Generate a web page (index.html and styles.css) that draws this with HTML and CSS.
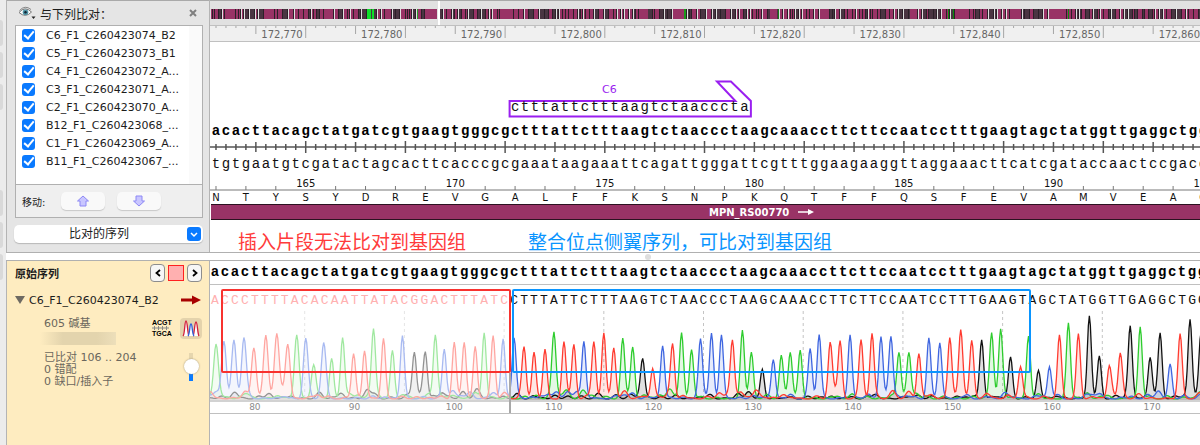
FILE: index.html
```
<!DOCTYPE html>
<html lang="zh-CN">
  <head>
    <meta charset="utf-8">
    <title>C6_F1_C260423074_B2</title>
    <link rel="stylesheet" href="styles.css">
  </head>

  <body>
    <div class="app">
      <div class="edge">
        <i></i><i></i><i></i><i class="low"></i><i></i><i></i>
      </div>

      <div class="side">
        <div class="side-head">
          <svg class="eye" width="20" height="14" viewBox="0 0 20 14">
            <path d="M1 6.500Q7-.5 13.500 6Q7.500 12.500 1 6.500Z" fill="#fff" stroke="#777" stroke-width="1"/>
            <path d="M1.500 4.500Q7-1.500 13 3.500" fill="none" stroke="#888"/>
            <circle cx="7.500" cy="6.200" r="2.800" fill="#4f93a4"/>
            <circle cx="7.500" cy="6.200" r="1.200" fill="#123"/>
            <path d="M13.500 10.500h4l-2 2.500z" fill="#222"/>
          </svg>
          <span>与下列比对：</span>
          <button class="close" aria-label="关闭">
            <svg width="8" height="8" viewBox="0 0 8 8"><path d="M1 1l6 6M7 1L1 7" stroke="#808080" stroke-width="2"/></svg>
          </button>
        </div>

        <div class="reads">
          <div class="list">
            <label><input type="checkbox" checked>C6_F1_C260423074_B2</label>
            <label><input type="checkbox" checked>C5_F1_C260423073_B1</label>
            <label><input type="checkbox" checked>C4_F1_C260423072_A...</label>
            <label><input type="checkbox" checked>C3_F1_C260423071_A...</label>
            <label><input type="checkbox" checked>C2_F1_C260423070_A...</label>
            <label><input type="checkbox" checked>B12_F1_C260423068_...</label>
            <label><input type="checkbox" checked>C1_F1_C260423069_A...</label>
            <label><input type="checkbox" checked>B11_F1_C260423067_...</label>
          </div>
          <div class="move">
            <span>移动:</span>
            <button aria-label="上移">
              <svg width="14" height="12" viewBox="0 0 14 12"><path d="M7 1l5.500 5H10v5H4V6H1.500z" fill="#c9c6ff" stroke="#8d88f5"/></svg>
            </button>
            <button aria-label="下移">
              <svg width="14" height="12" viewBox="0 0 14 12"><path d="M7 11l5.500-5H10V1H4v5H1.500z" fill="#c9c6ff" stroke="#8d88f5"/></svg>
            </button>
          </div>
        </div>

        <div class="picker">
          <select aria-label="显示">
            <option>比对的序列</option>
          </select>
          <svg width="14" height="14" viewBox="0 0 14 14"><rect width="14" height="14" rx="3" fill="#0a7aff"/><path d="M4 6l3 3 3-3" fill="none" stroke="#fff" stroke-width="1.500"/></svg>
        </div>
      </div>

      <div class="main">
        <div class="overview">
          <svg id="genome" viewBox="0 0 990 10" preserveAspectRatio="none"></svg>
          <b class="here"></b>
        </div>
        <div class="ruler"><div class="track" id="ruler"></div></div>
        <div class="feature">
          <span class="feature-name">C6</span>
          <div class="track" id="primer">
            <svg class="flag" viewBox="0 0 1000 39" preserveAspectRatio="none">
              <path d="M299.500 21H526L507.500 1.500H521.500L541.500 21V36.500H299.500Z" fill="none" stroke="#9a1ff0" stroke-width="2"/>
            </svg>
          </div>
        </div>
        <div class="track seq bold" id="top"></div>
        <div class="track" id="axis"></div>
        <div class="track seq" id="bottom"></div>
        <div class="track aanum" id="aanum"></div>
        <div class="track aa" id="aa"></div>
        <div class="gene">
          <span>MPN_RS00770</span>
          <svg width="16" height="8" viewBox="0 0 16 8"><path d="M0 4h12" stroke="#fff" stroke-width="1.500"/><path d="M10 1l6 3-6 3z" fill="#fff"/></svg>
        </div>
        <div class="notes">
          <span class="red">插入片段无法比对到基因组</span>
          <span class="blue">整合位点侧翼序列，可比对到基因组</span>
        </div>
      </div>

      <div class="split"><i></i></div>

      <div class="side original">
        <div class="orig-head">
          <b>原始序列</b>
          <button aria-label="上一个"><svg width="6" height="8" viewBox="0 0 6 8"><path d="M5 1L1.500 4L5 7" fill="none" stroke="#000" stroke-width="1.800"/></svg></button>
          <i></i>
          <button aria-label="下一个"><svg width="6" height="8" viewBox="0 0 6 8"><path d="M1 1l3.500 3L1 7" fill="none" stroke="#000" stroke-width="1.800"/></svg></button>
        </div>
        <div class="read-name">
          <svg width="10" height="8" viewBox="0 0 10 8"><path d="M0 0h10L5 8z" fill="#6e6a62"/></svg>
          <span>C6_F1_C260423074_B2</span>
          <svg class="arrow" width="20" height="10" viewBox="0 0 20 10"><path d="M0 3.500h11V.5L20 5l-9 4.500v-3H0z" fill="#a80000"/></svg>
        </div>
        <div class="info">
          <div class="facts">
            <p>605 碱基</p>
            <div class="hidden-name"></div>
            <p>已比对 106 .. 204</p>
            <p>0 错配</p>
            <p>0 缺口/插入子</p>
          </div>
          <div class="bases"><span>ACGT</span><svg width="17" height="4" viewBox="0 0 17 4"><path d="M0 2h17M2.500 0v4M6.500 0v4M10.500 0v4M14.500 0v4" stroke="#888" stroke-width="1"/></svg><span>TGCA</span></div>
          <div class="view">
            <button aria-label="峰图">
              <svg width="18" height="17" viewBox="0 0 18 17">
                <path d="M1 16C3 14 2.500 1 4 1S5.500 14 7 16M11 16C12.500 14 12.500 2 14 2S15.500 14 17 16" fill="#fff" stroke="#d3203c" stroke-width="1.300"/>
                <path d="M6 16C8 14 7.500 4 9 4S10 14 12 16" fill="#fff" stroke="#3060d8" stroke-width="1.300"/>
              </svg>
            </button>
            <input type="range" min="0" max="100" value="55" aria-label="峰高">
          </div>
        </div>
      </div>

      <div class="main">
        <div class="track seq bold ref" id="ref"></div>
        <div class="chroma">
          <div class="track seq read" id="read"></div>
          <div class="track" id="trace"></div>
          <div class="track readnum" id="readnum"></div>
          <div class="box box-red"></div>
          <div class="box box-blue"></div>
          <div class="cut"></div>
        </div>
      </div>
    </div>

    <script>
      const seq = 'acacttacagctatgatcgtgaagtgggcgctttattctttaagtctaaccctaagcaaaccttcttccaatcctttgaagtagctatggttgaggctgg';
      const read = 'ACCCTTTTACACAATTATACGGACTTTATC' + seq.slice(30).toUpperCase();
      const protein = 'NTYSYDREVGALFFKSNPKQTFFQSFEVAMVEAG';
      const pair = { a: 't', t: 'a', c: 'g', g: 'c' };

      // x and height of the main peak of every base of the read
      const peaks = [
        [6,50],[14,56],[24,58],[34,59],[44,51],[56,63],[67,61],[78,54],[87,64],[96,58],
        [104,34],[114,53],[122,39],[133,61],[144,43],[155,47],[164,68],[174,59],[183,48],[193,62],
        [205,43],[216,41],[226,61],[235,49],[245,55],[255,53],[266,52],[275,66],[284,59],[294,56],
        [305,60],[315,48],[325,45],[336,49],[345,62],[355,56],[365,52],[375,57],[385,55],[395,66],
        [405,50],[414,59],[424,50],[434,36],[444,30],[454,53],[464,53],[473,65],[483,48],[492,55],
        [503,64],[513,64],[524,57],[534,68],[543,43],[554,29],[565,39],[573,41],[582,46],[592,48],
        [602,48],[611,64],[622,52],[632,56],[642,64],[653,58],[664,64],[673,62],[683,57],[691,44],
        [701,42],[711,45],[721,60],[732,56],[742,60],[753,61],[764,52],[774,59],[784,66],[793,65],
        [803,39],[813,30],[821,62],[831,27],[842,32],[852,61],[861,74],[871,63],[882,82],[892,42],
        [902,27],[913,41],[923,68],[933,72],[943,41],[953,61],[963,34],[973,61],[983,79],[994,65]
      ];
      const inks = { G: '#111111', A: '#2ecc2e', C: '#3f66e0', T: '#ff3b30' };

      const byId = id => document.getElementById(id);
      let seed = 11;
      function rnd() {
        seed = (seed * 16807) % 2147483647;
        return seed / 2147483647;
      }

      function letters(id, text, step, first, cls) {
        let html = '';
        for (let i = 0; i < text.length; i++) {
          html += `<span class="${cls || ''}" style="grid-column:${first + i * step + 1}">${text[i]}</span>`;
        }
        byId(id).insertAdjacentHTML('beforeend', html);
      }

      function numbers(id, list) {
        byId(id).insertAdjacentHTML('beforeend', list.map(n =>
          `<span class="num" style="grid-column:${n[0]} / ${n[1]}">${n[2]}</span>`).join(''));
      }

      function draw(id, height, body) {
        byId(id).insertAdjacentHTML('afterbegin',
          `<svg viewBox="0 0 1000 ${height}" preserveAspectRatio="none" height="${height}">${body}</svg>`);
      }

      // ticks under every base: short, 5th and 10th
      function ticks(make) {
        let d = '';
        for (let i = 0; i < 100; i++) d += make(i * 10 + 5, (i + 1) % 10 == 0 ? 2 : (i + 1) % 5 == 0 ? 1 : 0, i);
        return d;
      }

      letters('top', seq, 1, 0);
      letters('bottom', [...seq].map(b => pair[b]).join(''), 1, 0);
      letters('ref', seq, 1, 0);
      letters('read', read.slice(0, 30), 1, 0, 'faded');
      letters('read', read.slice(30), 1, 30);
      letters('primer', seq.slice(30, 54), 1, 30);
      letters('aa', protein, 3, 0);

      draw('ruler', 15, `<path d="${ticks((x, k) => `M${x} 0v${[2, 8, 12][k]}`)}" stroke="#a6a6a6" stroke-width="1"/>`);
      draw('axis', 14, `<path d="M-2 7H1000${ticks((x, k) => `M${x} ${7 - [3, 5, 6][k]}v${[6, 10, 12][k]}`)}" stroke="#555" stroke-width="1.500"/>`);
      draw('aanum', 14, `<path d="M-2 13H1000${ticks((x, k, i) => i % 3 || i % 15 == 9 ? '' : `M${x} 9v4`)}" stroke="#777" stroke-width="1"/>`);

      const marks = [], aaMarks = [], readMarks = [];
      for (let i = 0; i < 10; i++) marks.push([i * 10 + 5, i * 10 + 11, (172770 + i * 10).toLocaleString('en-US')]);
      for (let i = 9, n = 165; i < 99; i += 15, n += 5) aaMarks.push([i, i + 3, n]);
      aaMarks.push([100, 101, 195]);
      for (let i = 4, n = 80; i < 100; i += 10, n += 10) readMarks.push([i - 1, i + 4, n]);
      numbers('ruler', marks);
      numbers('aanum', aaMarks);
      numbers('readnum', readMarks);

      // whole-genome strip
      const wide = [[17,8],[56,7],[114,8],[175,6],[219,8],[290,11],[430,8],[464,9],[560,7],[610,6],[700,7],[746,13],[800,9],[840,12]];
      let strip = '';
      for (let x = 1; x < 990;) {
        const w = 1 + Math.floor(rnd() * 4);
        strip += `<rect x="${x}" y="0" width="${w}" height="10" fill="${rnd() > .35 ? '#993366' : '#4a3542'}"/><rect x="${x + w}" y="0" width="1" height="10" fill="#2b2028"/>`;
        x += w + 1 + (rnd() > .6 ? 1 : 0);
      }
      wide.forEach(g => strip += `<rect x="${g[0]}" y="0" width="${g[1]}" height="10" fill="#993366"/>`);
      [[157,4,'#0ee02a'],[162,2,'#0ee02a'],[207,1,'#2a9a2a'],[474,2,'#1a9a1a'],[568,1,'#1a7a1a'],[738,1,'#0c8a0c'],[743,1,'#0c8a0c'],[858,1,'#0c8a0c']]
        .forEach(g => strip += `<rect x="${g[0]}" y="0" width="${g[1]}" height="10" fill="${g[2]}"/>`);
      byId('genome').innerHTML = strip;

      // four traces, summed from the main peaks and a low background
      const base = 89;
      let grid = '', fills = '', lines = '';
      for (let x = 95; x < 1000; x += 100) grid += `M${x} 0V${base}`;
      for (const b in inks) {
        const bumps = peaks.map((p, i) => [p[0], p[1], i < 12 ? 2.300 : 2]).filter((p, i) => read[i] == b);
        for (let x = 0; x < 1000; x += 6 + rnd() * 12) bumps.push([x, 1 + rnd() * rnd() * 10, 3]);
        let d = '';
        for (let x = 0; x <= 1000; x++) {
          let h = 0;
          bumps.forEach(p => {
            const t = (x - p[0]) / p[2];
            if (Math.abs(t) < 4) h += p[1] * Math.exp(-t * t / 2);
          });
          d += `${x ? 'L' : 'M'}${x} ${(base - 1 - h).toFixed(1)}`;
        }
        fills += `<path d="${d}V${base}H0Z" fill="${inks[b]}" fill-opacity=".13"/>`;
        lines += `<path d="${d}" fill="none" stroke="${inks[b]}" stroke-width="1.300"/>`;
      }
      draw('trace', 91, `<path d="${grid}" stroke="#c4c4c4" stroke-dasharray="3 3"/>${fills}${lines}
        <rect width="300" height="${base}" fill="#fff" fill-opacity=".55"/>
        <rect y="${base}" width="1000" height="2" fill="#d2d2d2"/>`);
    </script>
  </body>
</html>
```
FILE: styles.css
```
* {
  box-sizing: border-box;
}

body {
  margin: 0;
  background: #fff;
  color: #1c1c1c;
  font-family: "DejaVu Sans", "Noto Sans CJK SC", sans-serif;
  font-size: 11px;
}

button {
  display: flex;
  align-items: center;
  justify-content: center;
  padding: 0;
  border: 0;
  background: none;
}

p {
  margin: 0;
}

.app {
  display: grid;
  grid-template-columns: 6px 204px minmax(0, 1fr);
  grid-template-rows: auto auto 1fr;
  min-height: 100vh;
}

/* left window edge */
.edge {
  grid-row: 1 / 4;
  display: flex;
  flex-direction: column;
  gap: 6px;
  padding-top: 20px;
  background: #ececec;
}

.edge i {
  width: 3px;
  height: 26px;
  border-radius: 0 4px 4px 0;
  background: #d9d9d9;
}

.edge .low {
  margin-top: 74px;
}

.side {
  border-left: 1px solid #b4b4b4;
  border-right: 1px solid #b4b4b4;
  background: #e5e5e5;
}

.side-head {
  display: flex;
  align-items: center;
  height: 25px;
  padding: 0 12px 0 11px;
  border-top: 1px solid #a9a9a9;
  font-size: 12px;
}

.eye {
  margin-right: 2px;
}

.close {
  margin-left: auto;
}

.reads {
  margin: 0 6px 0 8px;
  border: 1px solid #b0b0b0;
  background: #fff;
}

.list {
  height: 158px;
  border-right: 13px solid #fafafa;
}

.list label {
  display: flex;
  align-items: center;
  height: 18px;
  padding-left: 6px;
  white-space: nowrap;
}

.list input {
  appearance: none;
  width: 13px;
  height: 13px;
  margin: 0 11px 0 0;
  border-radius: 3px;
  background: #0a7aff;
  display: grid;
  place-items: center;
}

.list input::before {
  content: "";
  width: 4px;
  height: 8px;
  margin-bottom: 2px;
  border: solid #fff;
  border-width: 0 2px 2px 0;
  transform: rotate(40deg);
}

.move {
  display: flex;
  align-items: center;
  gap: 12px;
  height: 33px;
  padding-left: 6px;
  border-top: 1px solid #b0b0b0;
  background: #efefef;
  font-size: 10px;
}

.move button {
  width: 44px;
  height: 18px;
  border-radius: 5px;
  background: #f9f9f9;
  box-shadow: 0 1px 1px #c8c8c8;
}

.move span {
  width: 27px;
}

.picker {
  position: relative;
  margin: 7px 6px 9px 7px;
}

.picker select {
  appearance: none;
  display: block;
  width: 100%;
  height: 18px;
  padding: 0 19px 0 0;
  border: 0;
  border-radius: 5px;
  background: #fff;
  box-shadow: 0 1px 1px #b8b8b8;
  color: #1c1c1c;
  font: inherit;
  font-size: 12px;
  text-align: center;
  text-align-last: center;
}

.picker svg {
  position: absolute;
  top: 2px;
  right: 2px;
  pointer-events: none;
}

/* one column per base */
.main {
  min-width: 0;
  overflow: hidden;
}

.track {
  display: grid;
  grid-template-columns: repeat(100, minmax(0, 1fr));
  width: calc(100% + 7px);
  margin-left: 1px;
}

.track svg {
  display: block;
  grid-area: 1 / 1 / 2 / -1;
  width: 100%;
  overflow: visible;
}

.track span {
  display: flex;
  grid-row: 1;
  justify-content: center;
}

.overview {
  position: relative;
  height: 26px;
  padding-top: 8px;
  border-top: 1px solid #a9a9a9;
  border-bottom: 1px solid #c0c0c0;
  background: #e1e1e1;
}

.overview svg {
  display: block;
  width: 100%;
  height: 10px;
}

.here {
  position: absolute;
  top: 0;
  left: 23%;
  width: 2px;
  height: 24px;
  background: #fff;
}

.ruler {
  height: 16px;
  border-bottom: 1px solid #c0c0c0;
  background: #f0f0f0;
}

.ruler .num {
  justify-content: flex-end;
  padding-right: 8px;
  color: #666;
  font-size: 10px;
  line-height: 17px;
}

.feature {
  position: relative;
  height: 80px;
  padding-top: 38px;
}

.feature-name {
  position: absolute;
  top: 41px;
  left: 39.600%;
  color: #9a1ff0;
}

#primer {
  height: 39px;
  font: 14px/54px "Liberation Mono", monospace;
  color: #111;
}

.flag {
  height: 39px;
}

.seq {
  font: 14px/18px "Liberation Mono", monospace;
  color: #111;
}

.bold {
  font-weight: bold;
  color: #000;
}

#axis {
  height: 14px;
}

#bottom {
  line-height: 20px;
}

.aanum,
.aa {
  color: #111;
  font-size: 10px;
  line-height: 13px;
}

.aanum {
  margin-top: 3px;
  height: 14px;
}

.gene {
  display: flex;
  align-items: center;
  gap: 9px;
  height: 16px;
  margin-left: 1px;
  padding-left: 50.300%;
  border: solid #2b1220;
  border-width: 1px 0;
  background: #993366;
  color: #fff;
  font-size: 10px;
  font-weight: bold;
}

.notes {
  display: flex;
  gap: 62px;
  height: 32px;
  padding: 7px 0 0 28px;
  font: 19px/28px "Noto Sans CJK SC", sans-serif;
  white-space: nowrap;
}

.red {
  color: #ff3b3b;
}

.blue {
  color: #0a95ff;
}

.split {
  grid-column: 2 / 4;
  display: flex;
  align-items: center;
  justify-content: center;
  height: 9px;
  padding-left: 90px;
  border: solid #b0b0b0;
  border-width: 1px 0;
  background: #fff;
}

.split i {
  width: 6px;
  height: 6px;
  border-radius: 50%;
  background: #dedede;
}

/* original sequence panel */
.original {
  background: #feecc0;
}

.orig-head {
  display: flex;
  align-items: center;
  gap: 3px;
  height: 24px;
  padding: 0 7px 0 8px;
}

.orig-head b {
  flex: 1;
}

.orig-head button {
  width: 15px;
  height: 18px;
  border: 1px solid #8d8d8d;
  border-radius: 4px;
  background: #f6f6f6;
}

.orig-head i {
  width: 16px;
  height: 16px;
  border: 1px solid #ff2020;
  background: #ffb0b0;
}

.read-name {
  display: flex;
  align-items: center;
  gap: 4px;
  height: 30px;
  padding: 0 8px;
}

.read-name .arrow {
  margin-left: auto;
}

.info {
  display: flex;
  align-items: flex-start;
  padding: 3px 7px 0 37px;
}

.facts {
  flex: 1;
  color: #6b675d;
  line-height: 12px;
  white-space: nowrap;
}

.hidden-name {
  width: 76px;
  height: 13px;
  margin: 2px 0 7px -4px;
  background: linear-gradient(90deg, #feecc0, #e3d4ad 30%, #e3d4ad 75%, #eddfba);
}

.bases {
  width: 19px;
  margin: 1px 9px 0 0;
  color: #000;
  font: bold 7px/7px "Liberation Sans", sans-serif;
}

.bases span,
.bases svg {
  display: block;
}

.view {
  display: flex;
  flex-direction: column;
  align-items: center;
  gap: 14px;
}

.view button {
  width: 22px;
  height: 21px;
  border-radius: 4px;
  background: #e4d3ac;
}

.view input {
  appearance: none;
  width: 15px;
  height: 28px;
  margin: 0;
  background: linear-gradient(#e6d6ae 50%, #0a7aff 50%) center / 4px 100% no-repeat;
  direction: rtl;
  writing-mode: vertical-lr;
}

.view input::-webkit-slider-thumb {
  appearance: none;
  width: 15px;
  height: 15px;
  border-radius: 50%;
  background: #fff;
  box-shadow: 0 0 2px #9a9072;
}

/* chromatogram */
.ref {
  margin-left: 0;
  padding: 2px 0 3px;
  border-bottom: 1px solid #c0c0c0;
}

.chroma {
  position: relative;
  border-bottom: 1px solid #c0c0c0;
}

.chroma .track {
  margin-left: 0;
}

.read {
  height: 26px;
  font-size: 13px;
  line-height: 32px;
}

.read .faded {
  color: #ffb0b0;
}

.readnum {
  height: 11px;
  color: #8a8a8a;
  font-size: 9px;
  line-height: 11px;
}

.box {
  position: absolute;
  top: 4px;
  height: 84px;
  border: 2px solid;
  border-radius: 2px;
}

.box-red {
  left: 1.100%;
  width: 29.300%;
  border-color: #f8322f;
}

.box-blue {
  left: 30.500%;
  width: 52.400%;
  border-color: #0a95ff;
}

.cut {
  position: absolute;
  top: 88px;
  bottom: 0;
  left: 30.200%;
  width: 2px;
  background: #a8a8a8;
}
```
